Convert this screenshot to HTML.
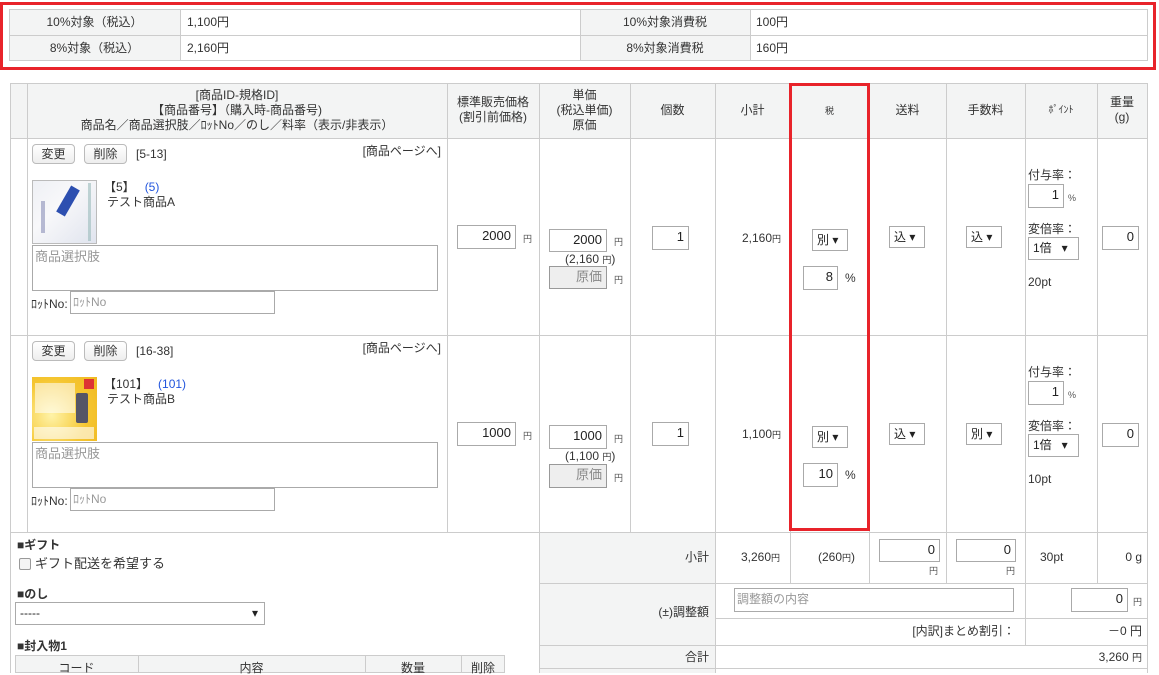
<!DOCTYPE html>
<html><head><meta charset="utf-8"><style>
*{box-sizing:border-box;margin:0;padding:0}
body{width:1159px;height:673px;overflow:hidden;background:#fff;font-family:"Liberation Sans","Noto Sans CJK JP",sans-serif;font-size:12px;color:#333;position:relative}
div,span{position:absolute}
.h{background:#ccc}
.g{background:#f3f4f4}
.t{white-space:nowrap;line-height:14px}
.c{text-align:center}
.r{text-align:right}
.in{border:1px solid #aaa;background:#fff;text-align:right;padding-right:4px;line-height:20px;font-size:13px;color:#222}
.sel{border:1px solid #aaa;background:#fff;line-height:20px;font-size:12px;padding-left:4px;color:#222}
.btn{border:1px solid #bbb;border-radius:4px;background:linear-gradient(#fff,#eee);text-align:center;line-height:18px;font-size:12px}
.y{font-size:9px;color:#555}
.ph{color:#999}
</style></head><body>

<!-- top summary -->
<div style="left:0;top:2px;width:1156px;height:68px;border:3px solid #e8232a"></div>
<div class="g" style="left:9px;top:9px;width:171px;height:52px"></div>
<div class="g" style="left:580px;top:9px;width:170px;height:52px"></div>
<div style="left:9px;top:9px;width:1139px;height:52px;border:1px solid #ccc"></div>
<div class="h" style="left:9px;top:35px;width:1139px;height:1px"></div>
<div class="h" style="left:180px;top:9px;width:1px;height:52px"></div>
<div class="h" style="left:580px;top:9px;width:1px;height:52px"></div>
<div class="h" style="left:750px;top:9px;width:1px;height:52px"></div>
<div class="t c" style="left:9px;top:15px;width:171px">10%対象（税込）</div>
<div class="t c" style="left:9px;top:41px;width:171px">8%対象（税込）</div>
<div class="t" style="left:187px;top:15px">1,100円</div>
<div class="t" style="left:187px;top:41px">2,160円</div>
<div class="t c" style="left:580px;top:15px;width:170px">10%対象消費税</div>
<div class="t c" style="left:580px;top:41px;width:170px">8%対象消費税</div>
<div class="t" style="left:756px;top:15px">100円</div>
<div class="t" style="left:756px;top:41px">160円</div>

<!-- main table backgrounds -->
<div class="g" style="left:10px;top:83px;width:1138px;height:55px"></div>
<div class="g" style="left:539px;top:532px;width:176px;height:141px"></div>
<!-- main outer -->
<div class="h" style="left:10px;top:83px;width:1138px;height:1px"></div>
<div class="h" style="left:10px;top:83px;width:1px;height:590px"></div>
<div class="h" style="left:1147px;top:83px;width:1px;height:590px"></div>
<!-- horizontal lines -->
<div class="h" style="left:10px;top:138px;width:1138px;height:1px"></div>
<div class="h" style="left:10px;top:335px;width:1138px;height:1px"></div>
<div class="h" style="left:10px;top:532px;width:1138px;height:1px"></div>
<div class="h" style="left:539px;top:583px;width:609px;height:1px"></div>
<div class="h" style="left:715px;top:618px;width:433px;height:1px"></div>
<div class="h" style="left:539px;top:645px;width:609px;height:1px"></div>
<div class="h" style="left:539px;top:668px;width:609px;height:1px"></div>
<!-- vertical lines rows -->
<div class="h" style="left:27px;top:83px;width:1px;height:450px"></div>
<div class="h" style="left:447px;top:83px;width:1px;height:450px"></div>
<div class="h" style="left:539px;top:83px;width:1px;height:590px"></div>
<div class="h" style="left:630px;top:83px;width:1px;height:450px"></div>
<div class="h" style="left:715px;top:83px;width:1px;height:590px"></div>
<div class="h" style="left:790px;top:83px;width:1px;height:500px"></div>
<div class="h" style="left:869px;top:83px;width:1px;height:500px"></div>
<div class="h" style="left:946px;top:83px;width:1px;height:500px"></div>
<div class="h" style="left:1025px;top:83px;width:1px;height:562px"></div>
<div class="h" style="left:1097px;top:83px;width:1px;height:500px"></div>

<!-- header text -->
<div class="t c" style="left:27px;top:88px;width:420px;line-height:15px">[商品ID-規格ID]<br>【商品番号】（購入時-商品番号)<br>商品名／商品選択肢／ﾛｯﾄNo／のし／料率（表示/非表示）</div>
<div class="t c" style="left:447px;top:95px;width:92px;line-height:15px">標準販売価格<br>(割引前価格)</div>
<div class="t c" style="left:539px;top:88px;width:91px;line-height:15px">単価<br>(税込単価)<br>原価</div>
<div class="t c" style="left:630px;top:103px;width:85px">個数</div>
<div class="t c" style="left:715px;top:103px;width:75px">小計</div>
<div class="t c" style="left:790px;top:104px;width:79px;font-size:9px">税</div>
<div class="t c" style="left:869px;top:103px;width:77px">送料</div>
<div class="t c" style="left:946px;top:103px;width:79px">手数料</div>
<div class="t c" style="left:1025px;top:104px;width:72px;font-size:10px">ﾎﾟｲﾝﾄ</div>
<div class="t c" style="left:1097px;top:95px;width:50px;line-height:15px">重量<br>(g)</div>

<!-- ROW 1 -->
<div class="btn" style="left:32px;top:144px;width:43px;height:20px">変更</div>
<div class="btn" style="left:84px;top:144px;width:43px;height:20px">削除</div>
<div class="t" style="left:136px;top:147px">[5-13]</div>
<div class="t r" style="left:300px;top:144px;width:141px">[商品ページへ]</div>
<div style="left:32px;top:180px;width:65px;height:64px;border:1px solid #bbb;background:linear-gradient(135deg,#eef0f5 0%,#f8f8fa 40%,#e0e4ee 100%)"><span style="left:30px;top:5px;width:10px;height:30px;background:#2d4fb0;transform:rotate(30deg)"></span><span style="left:8px;top:20px;width:4px;height:32px;background:#8a90b8;opacity:.6"></span><span style="left:55px;top:2px;width:3px;height:58px;background:#9bb;opacity:.6"></span></div>
<div class="t" style="left:104px;top:180px">【5】&nbsp;&nbsp;&nbsp;<span style="position:static;color:#2255dd">(5)</span></div>
<div class="t" style="left:107px;top:195px">テスト商品A</div>
<div style="left:32px;top:245px;width:406px;height:46px;border:1px solid #aaa"></div>
<div class="t ph" style="left:35px;top:250px;font-size:13px">商品選択肢</div>
<div class="t" style="left:31px;top:297px">ﾛｯﾄNo:</div>
<div class="in" style="left:70px;top:291px;width:205px;height:23px;text-align:left;padding-left:2px;color:#999;font-size:12px">ﾛｯﾄNo</div>
<div class="in" style="left:457px;top:225px;width:59px;height:24px">2000</div><div class="t y" style="left:523px;top:232px">円</div>
<div class="in" style="left:549px;top:229px;width:58px;height:23px">2000</div><div class="t y" style="left:614px;top:235px">円</div>
<div class="t" style="left:565px;top:252px">(2,160 <span style="position:static;font-size:9px">円</span>)</div>
<div class="in" style="left:549px;top:266px;width:58px;height:23px;background:#eee;color:#888;border-color:#999">原価</div><div class="t y" style="left:614px;top:273px">円</div>
<div class="in" style="left:652px;top:226px;width:37px;height:24px">1</div>
<div class="t" style="left:742px;top:231px">2,160<span style="position:static;font-size:9px">円</span></div>
<div class="sel" style="left:812px;top:229px;width:36px;height:22px">別 ▾</div>
<div class="in" style="left:803px;top:266px;width:35px;height:24px">8</div><div class="t" style="left:845px;top:271px">%</div>
<div class="sel" style="left:889px;top:226px;width:36px;height:22px">込 ▾</div>
<div class="sel" style="left:966px;top:226px;width:36px;height:22px">込 ▾</div>
<div class="t" style="left:1028px;top:168px">付与率：</div>
<div class="in" style="left:1028px;top:184px;width:36px;height:24px">1</div><div class="t y" style="left:1068px;top:191px">%</div>
<div class="t" style="left:1028px;top:222px">変倍率：</div>
<div class="sel" style="left:1028px;top:237px;width:51px;height:23px">1倍&nbsp;&nbsp;&nbsp;▾</div>
<div class="t" style="left:1028px;top:275px">20pt</div>
<div class="in" style="left:1102px;top:226px;width:37px;height:24px">0</div>

<!-- ROW 2 -->
<div class="btn" style="left:32px;top:341px;width:43px;height:20px">変更</div>
<div class="btn" style="left:84px;top:341px;width:43px;height:20px">削除</div>
<div class="t" style="left:136px;top:344px">[16-38]</div>
<div class="t r" style="left:300px;top:341px;width:141px">[商品ページへ]</div>
<div style="left:32px;top:377px;width:65px;height:64px;background:radial-gradient(circle at 30% 60%,#fff3a8,#f5c631 60%,#f0b820)"><span style="left:3px;top:6px;width:40px;height:30px;background:rgba(255,255,255,.55)"></span><span style="left:44px;top:16px;width:12px;height:30px;background:#556;border-radius:2px"></span><span style="left:52px;top:2px;width:10px;height:10px;background:#d33"></span><span style="left:2px;top:50px;width:60px;height:12px;background:rgba(255,255,255,.6)"></span></div>
<div class="t" style="left:104px;top:377px">【101】&nbsp;&nbsp;&nbsp;<span style="position:static;color:#2255dd">(101)</span></div>
<div class="t" style="left:107px;top:392px">テスト商品B</div>
<div style="left:32px;top:442px;width:406px;height:46px;border:1px solid #aaa"></div>
<div class="t ph" style="left:35px;top:447px;font-size:13px">商品選択肢</div>
<div class="t" style="left:31px;top:494px">ﾛｯﾄNo:</div>
<div class="in" style="left:70px;top:488px;width:205px;height:23px;text-align:left;padding-left:2px;color:#999;font-size:12px">ﾛｯﾄNo</div>
<div class="in" style="left:457px;top:422px;width:59px;height:24px">1000</div><div class="t y" style="left:523px;top:429px">円</div>
<div class="in" style="left:549px;top:425px;width:58px;height:24px">1000</div><div class="t y" style="left:614px;top:432px">円</div>
<div class="t" style="left:565px;top:449px">(1,100 <span style="position:static;font-size:9px">円</span>)</div>
<div class="in" style="left:549px;top:464px;width:58px;height:24px;background:#eee;color:#888;border-color:#999">原価</div><div class="t y" style="left:614px;top:471px">円</div>
<div class="in" style="left:652px;top:422px;width:37px;height:24px">1</div>
<div class="t" style="left:742px;top:427px">1,100<span style="position:static;font-size:9px">円</span></div>
<div class="sel" style="left:812px;top:426px;width:36px;height:22px">別 ▾</div>
<div class="in" style="left:803px;top:463px;width:35px;height:24px">10</div><div class="t" style="left:845px;top:468px">%</div>
<div class="sel" style="left:889px;top:423px;width:36px;height:22px">込 ▾</div>
<div class="sel" style="left:966px;top:423px;width:36px;height:22px">別 ▾</div>
<div class="t" style="left:1028px;top:365px">付与率：</div>
<div class="in" style="left:1028px;top:381px;width:36px;height:24px">1</div><div class="t y" style="left:1068px;top:388px">%</div>
<div class="t" style="left:1028px;top:419px">変倍率：</div>
<div class="sel" style="left:1028px;top:434px;width:51px;height:23px">1倍&nbsp;&nbsp;&nbsp;▾</div>
<div class="t" style="left:1028px;top:472px">10pt</div>
<div class="in" style="left:1102px;top:423px;width:37px;height:24px">0</div>

<!-- red highlight around tax column -->
<div style="left:789px;top:83px;width:81px;height:448px;border:3px solid #e8232a"></div>

<!-- footer left -->
<div class="t" style="left:17px;top:538px;font-weight:bold">■ギフト</div>
<div style="left:19px;top:558px;width:12px;height:12px;border:1px solid #999;border-radius:2px;background:#f4f4f4"></div>
<div class="t" style="left:35px;top:557px;font-size:13px">ギフト配送を希望する</div>
<div class="t" style="left:17px;top:587px;font-weight:bold">■のし</div>
<div class="sel" style="left:15px;top:602px;width:250px;height:23px">-----<span style="right:6px;top:0">▾</span></div>
<div class="t" style="left:17px;top:639px;font-weight:bold">■封入物1</div>
<div class="g" style="left:15px;top:655px;width:490px;height:18px;border:1px solid #ccc"></div>
<div class="h" style="left:138px;top:655px;width:1px;height:18px"></div>
<div class="h" style="left:365px;top:655px;width:1px;height:18px"></div>
<div class="h" style="left:461px;top:655px;width:1px;height:18px"></div>
<div class="t c" style="left:15px;top:661px;width:123px">コード</div>
<div class="t c" style="left:138px;top:661px;width:227px">内容</div>
<div class="t c" style="left:365px;top:661px;width:96px">数量</div>
<div class="t c" style="left:461px;top:661px;width:44px">削除</div>

<!-- footer right -->
<div class="t r" style="left:539px;top:550px;width:170px">小計</div>
<div class="t" style="left:741px;top:550px">3,260<span style="position:static;font-size:9px">円</span></div>
<div class="t" style="left:818px;top:550px">(260<span style="position:static;font-size:9px">円</span>)</div>
<div class="in" style="left:879px;top:539px;width:61px;height:23px">0</div><div class="t y" style="left:929px;top:564px">円</div>
<div class="in" style="left:956px;top:539px;width:60px;height:23px">0</div><div class="t y" style="left:1006px;top:564px">円</div>
<div class="t" style="left:1040px;top:550px">30pt</div>
<div class="t r" style="left:1097px;top:550px;width:45px">0 g</div>
<div class="t r" style="left:539px;top:605px;width:170px">(±)調整額</div>
<div class="in" style="left:734px;top:588px;width:280px;height:24px;text-align:left;padding-left:2px;color:#999;font-size:12px">調整額の内容</div>
<div class="in" style="left:1071px;top:588px;width:57px;height:24px">0</div><div class="t y" style="left:1133px;top:595px">円</div>
<div class="t r" style="left:715px;top:624px;width:300px">[内訳]まとめ割引：</div>
<div class="t r" style="left:1025px;top:624px;width:117px">－0 円</div>
<div class="t r" style="left:539px;top:650px;width:170px">合計</div>
<div class="t r" style="left:715px;top:650px;width:427px">3,260 <span style="position:static;font-size:10px">円</span></div>
</body></html>
